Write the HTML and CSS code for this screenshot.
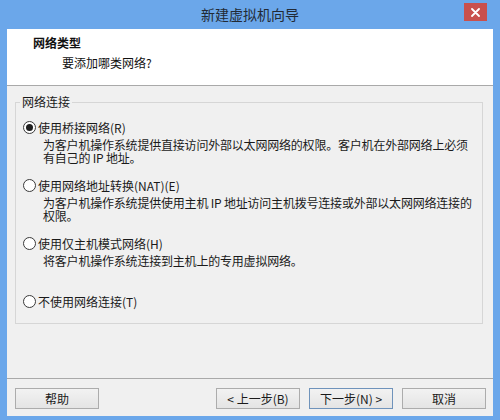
FILE: index.html
```html
<!DOCTYPE html>
<html lang="zh-CN">
<head>
<meta charset="utf-8">
<title>新建虚拟机向导</title>
<link rel="stylesheet" href="styles.css">
</head>
<body>
<div class="window">
  <div class="titlebar">
    <span class="spacer"></span>
    <span class="title">新建虚拟机向导</span>
    <button class="close" type="button" aria-label="关闭">
      <svg width="9" height="9" viewBox="0 0 9 9"><path d="M1 1 L8 8 M8 1 L1 8" stroke="#fff" stroke-width="1.8" stroke-linecap="round"/></svg>
    </button>
  </div>
  <div class="client">
    <div class="header">
      <div class="h-title">网络类型</div>
      <div class="h-sub">要添加哪类网络?</div>
    </div>
    <div class="main">
      <fieldset class="group">
        <legend>网络连接</legend>
        <div class="option first">
          <div class="opt-label"><span class="radio checked"></span>使用桥接网络(R)</div>
          <div class="desc">为客户机操作系统提供直接访问外部以太网网络的权限。客户机在外部网络上必须<br>有自己的 IP 地址。</div>
        </div>
        <div class="option">
          <div class="opt-label"><span class="radio"></span>使用网络地址转换(NAT)(E)</div>
          <div class="desc">为客户机操作系统提供使用主机 IP 地址访问主机拨号连接或外部以太网网络连接的<br>权限。</div>
        </div>
        <div class="option">
          <div class="opt-label"><span class="radio"></span>使用仅主机模式网络(H)</div>
          <div class="desc two">将客户机操作系统连接到主机上的专用虚拟网络。</div>
        </div>
        <div class="option">
          <div class="opt-label"><span class="radio"></span>不使用网络连接(T)</div>
        </div>
      </fieldset>
    </div>
    <div class="footer">
      <button class="btn" type="button">帮助</button>
      <div class="btn-group">
        <button class="btn" type="button">&lt; 上一步(B)</button>
        <button class="btn default" type="button">下一步(N) &gt;</button>
        <button class="btn" type="button">取消</button>
      </div>
    </div>
  </div>
</div>
</body>
</html>
```

FILE: styles.css
```css
* { box-sizing: border-box; }
html, body { margin: 0; padding: 0; }
body {
  width: 500px;
  height: 420px;
  overflow: hidden;
  font-family: "Noto Sans CJK SC", "Microsoft YaHei", sans-serif;
  font-size: 12px;
  color: #1a1a1a;
}
.window {
  width: 500px;
  height: 420px;
  background: #6ba7ea;
  display: flex;
  flex-direction: column;
}
.titlebar {
  height: 29px;
  display: grid;
  grid-template-columns: 1fr auto 1fr;
  align-items: start;
}
.title {
  font-size: 14px;
  line-height: 29px;
  color: #222a35;
}
.close {
  justify-self: end;
  margin: 3px 13px 0 0;
  width: 23px;
  height: 18px;
  padding: 0;
  border: none;
  background: #c9504d;
  display: flex;
  align-items: center;
  justify-content: center;
}
.client {
  flex: 1;
  margin: 0 7px 4px 7px;
  background: #f0f0f0;
  display: flex;
  flex-direction: column;
}
.header {
  height: 57px;
  background: #fff;
  border-bottom: 1px solid #a9a9a9;
  padding: 7px 0 0 26px;
}
.h-title {
  font-weight: bold;
  line-height: 14px;
  color: #111;
}
.h-sub {
  margin: 6px 0 0 29px;
  line-height: 14px;
  color: #111;
}
.main {
  flex: 1;
  padding: 9px 10px 0 8px;
}
.group {
  margin: 0;
  min-width: 0;
  height: 229px;
  border: 1px solid #d6d6d6;
  padding: 0 4px 0 7px;
}
.group legend {
  line-height: 14px;
  padding: 0 2px;
  margin-left: -3px;
  color: #1a1a1a;
}
.option { margin-top: 15px; }
.option.first { margin-top: 12px; }
.opt-label {
  display: flex;
  align-items: center;
  line-height: 13px;
  height: 13px;
  white-space: nowrap;
}
.radio {
  width: 13px;
  height: 13px;
  border-radius: 50%;
  border: 1px solid #3a3a3a;
  background: #fff;
  margin-right: 2px;
  flex: none;
  display: flex;
  align-items: center;
  justify-content: center;
}
.radio.checked::after {
  content: "";
  width: 7px;
  height: 7px;
  border-radius: 50%;
  background: #1f1f1f;
}
.desc {
  margin-top: 4px;
  padding-left: 20px;
  line-height: 13px;
  white-space: nowrap;
  letter-spacing: -0.2px;
}
.desc.two { min-height: 26px; }
.footer {
  height: 38px;
  border-top: 1px solid #a9a9a9;
  padding: 9px 7px 0 8px;
  display: flex;
  justify-content: space-between;
  align-items: flex-start;
}
.btn-group {
  display: flex;
  gap: 9px;
}
.btn {
  width: 84px;
  height: 21px;
  padding: 0;
  font-family: inherit;
  font-size: 12px;
  color: #1a1a1a;
  background: linear-gradient(#f2f2f2, #e4e4e4);
  border: 1px solid #acacac;
  line-height: 19px;
}
.btn.default {
  border-color: #6f93bb;
}
```
